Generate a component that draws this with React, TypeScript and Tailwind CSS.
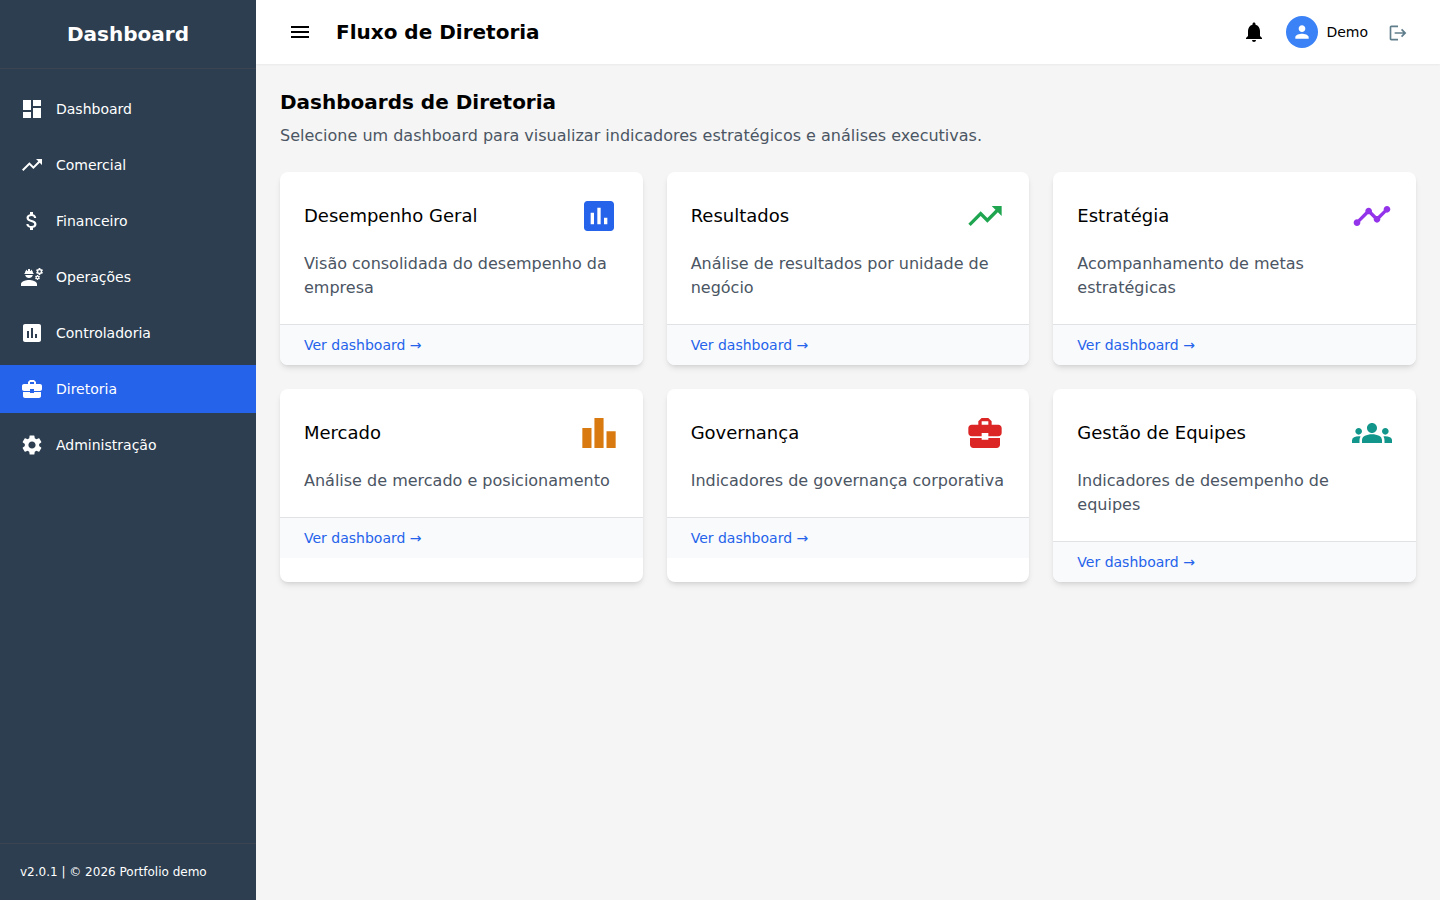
import { useState } from "react";
import type { IconType } from "react-icons";
import {
  MdAssessment,
  MdAttachMoney,
  MdBusinessCenter,
  MdDashboard,
  MdEngineering,
  MdGroups,
  MdLeaderboard,
  MdLogout,
  MdMenu,
  MdNotifications,
  MdPerson,
  MdSettings,
  MdTimeline,
  MdTrendingUp,
} from "react-icons/md";

const menuItems: { label: string; icon: IconType }[] = [
  { label: "Dashboard", icon: MdDashboard },
  { label: "Comercial", icon: MdTrendingUp },
  { label: "Financeiro", icon: MdAttachMoney },
  { label: "Operações", icon: MdEngineering },
  { label: "Controladoria", icon: MdAssessment },
  { label: "Diretoria", icon: MdBusinessCenter },
  { label: "Administração", icon: MdSettings },
];

const dashboards: {
  title: string;
  description: string;
  icon: IconType;
  color: string;
}[] = [
  {
    title: "Desempenho Geral",
    description: "Visão consolidada do desempenho da empresa",
    icon: MdAssessment,
    color: "text-[#2563eb]",
  },
  {
    title: "Resultados",
    description: "Análise de resultados por unidade de negócio",
    icon: MdTrendingUp,
    color: "text-[#1fa550]",
  },
  {
    title: "Estratégia",
    description: "Acompanhamento de metas estratégicas",
    icon: MdTimeline,
    color: "text-[#9333ea]",
  },
  {
    title: "Mercado",
    description: "Análise de mercado e posicionamento",
    icon: MdLeaderboard,
    color: "text-[#d97a10]",
  },
  {
    title: "Governança",
    description: "Indicadores de governança corporativa",
    icon: MdBusinessCenter,
    color: "text-[#dc2626]",
  },
  {
    title: "Gestão de Equipes",
    description: "Indicadores de desempenho de equipes",
    icon: MdGroups,
    color: "text-[#12968b]",
  },
];

function Sidebar({
  active,
  onSelect,
}: {
  active: string;
  onSelect: (label: string) => void;
}) {
  return (
    <aside className="w-64 shrink-0 flex flex-col bg-[#2c3e50] text-white">
      <div className="h-[69px] flex items-center justify-center border-b border-[#3d4451]">
        <h2 className="text-xl font-bold">Dashboard</h2>
      </div>
      <nav className="flex-1 py-4 flex flex-col gap-2">
        {menuItems.map(({ label, icon: Icon }) => (
          <button
            key={label}
            onClick={() => onSelect(label)}
            className={`h-12 px-5 flex items-center gap-3 text-sm text-left ${
              active === label ? "bg-[#2563eb]" : "hover:bg-white/10"
            }`}
          >
            <Icon size={24} />
            <span>{label}</span>
          </button>
        ))}
      </nav>
      <footer className="p-5 border-t border-[#3d4451] text-xs">
        v2.0.1 | © 2026 Portfolio demo
      </footer>
    </aside>
  );
}

function Header() {
  return (
    <header className="h-16 shrink-0 px-6 flex items-center justify-between bg-white shadow-[0_1px_2px_0_rgb(0_0_0/0.05)]">
      <div className="flex items-center gap-4">
        <button className="p-2" aria-label="Menu">
          <MdMenu size={24} />
        </button>
        <h1 className="text-xl font-bold">Fluxo de Diretoria</h1>
      </div>
      <div className="flex items-center gap-3">
        <button className="p-2" aria-label="Notificações">
          <MdNotifications size={24} />
        </button>
        <div className="flex items-center gap-2">
          <div className="size-8 rounded-full bg-[#3b82f6] text-white flex items-center justify-center">
            <MdPerson size={20} />
          </div>
          <span className="text-sm">Demo</span>
        </div>
        <button className="px-2 pt-2.5 pb-2 text-[#607d8b]" aria-label="Sair">
          <MdLogout size={20} />
        </button>
      </div>
    </header>
  );
}

export default function App() {
  const [active, setActive] = useState("Diretoria");

  return (
    <div className="min-h-screen flex bg-[#f5f5f5] text-black font-['DejaVu_Sans',sans-serif]">
      <Sidebar active={active} onSelect={setActive} />
      <div className="flex-1 flex flex-col">
        <Header />
        <main className="flex-1 p-6">
          <h2 className="text-xl font-bold mb-2">Dashboards de Diretoria</h2>
          <p className="text-[#4b5563] mb-6">
            Selecione um dashboard para visualizar indicadores estratégicos e
            análises executivas.
          </p>

          <div className="grid grid-cols-3 gap-6">
            {dashboards.map(({ title, description, icon: Icon, color }) => (
              <div
                key={title}
                className="bg-white rounded-lg shadow-md overflow-hidden"
              >
                <div className="p-6">
                  <div className="flex items-center justify-between mb-4">
                    <h3 className="text-lg">{title}</h3>
                    <Icon size={40} className={color} />
                  </div>
                  <p className="text-[#4b5563]">{description}</p>
                </div>
                <div className="px-6 py-2.5 flex bg-[#f8fafc] border-t border-[#e0e2e5]">
                  <a href="#" className="text-sm text-[#2563eb]">
                    Ver dashboard →
                  </a>
                </div>
              </div>
            ))}
          </div>
        </main>
      </div>
    </div>
  );
}
